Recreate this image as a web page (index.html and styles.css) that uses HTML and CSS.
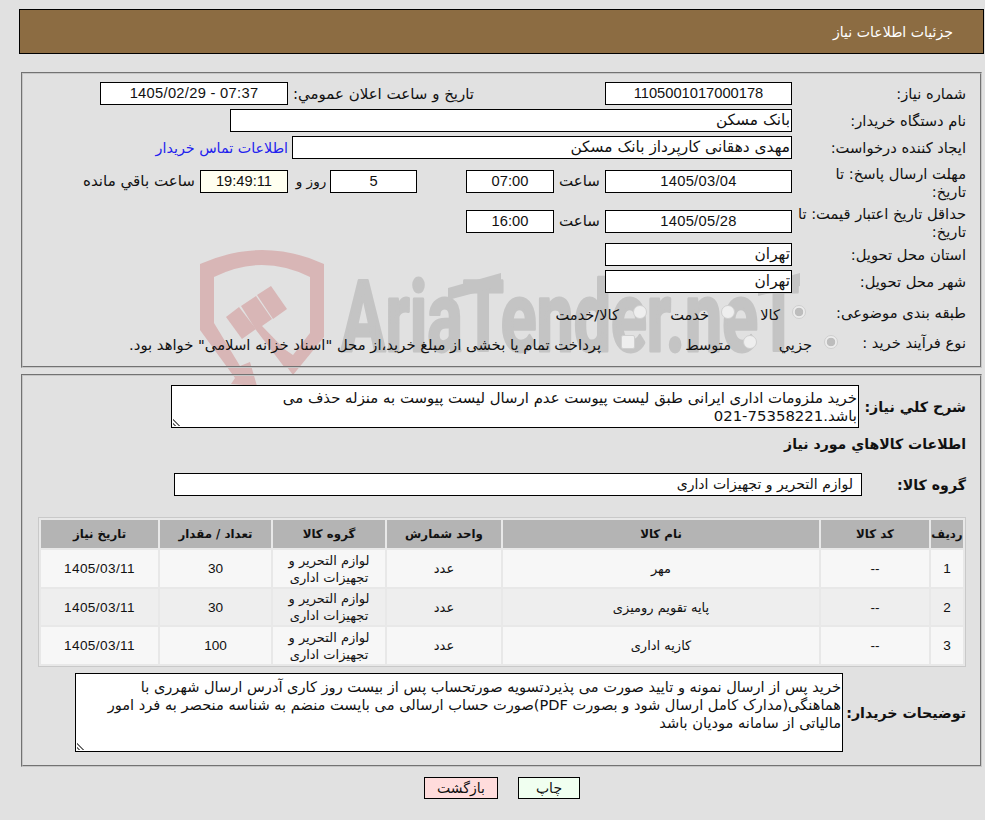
FILE: index.html
```html
<!DOCTYPE html>
<html lang="fa" dir="rtl">
<head>
<meta charset="utf-8">
<title>جزئیات اطلاعات نیاز</title>
<link rel="stylesheet" href="styles.css">
</head>
<body>
<svg class="watermark" viewBox="0 0 985 820" aria-hidden="true">
  <g class="wm-shield">
    <path d="M200 264 Q232 250 262 250 Q294 250 324 264 L324 337 L293 375 L262 334 L293 355 L310 333 L310 277 Q286 265 262 265 Q238 265 214 277 L214 323 L240 366 L250 362 L257 386 L231 384 L235 378 L200 330 Z"/>
    <polygon points="226,317 239,307 256,329 242,339"/>
    <polygon points="241,306 256,296 272,319 262,326 295,360 285,368 256,330"/>
    <polygon points="257,295 271,286 287,309 273,319"/>
  </g>
  <g class="wm-word">
    <text x="341" y="351" textLength="458" lengthAdjust="spacingAndGlyphs">AriaTender.neT</text>
    <polygon points="448,288 501,273 501,286 448,300"/>
    <polygon points="758,285 800,273 800,286 758,296"/>
  </g>
</svg>
<div class="page">
  <header class="title-bar">جزئیات اطلاعات نیاز</header>

  <section class="panel panel-top">
    <div class="row">
      <div class="lbl">شماره نیاز:</div>
      <div class="field f-main num">1105001017000178</div>
      <div class="lbl lbl-announce">تاریخ و ساعت اعلان عمومي:</div>
      <div class="field f-announce num date" dir="ltr">1405/02/29 - 07:37</div>
    </div>
    <div class="row">
      <div class="lbl">نام دستگاه خریدار:</div>
      <div class="field f-buyer text">بانک مسکن</div>
    </div>
    <div class="row">
      <div class="lbl">ایجاد کننده درخواست:</div>
      <div class="field f-creator text">مهدی دهقانی کارپرداز بانک مسکن</div>
      <a class="contact" href="#">اطلاعات تماس خریدار</a>
    </div>
    <div class="row row-tall">
      <div class="lbl">مهلت ارسال پاسخ: تا<br>تاریخ:</div>
      <div class="field f-main num date">1405/03/04</div>
      <div class="hour">ساعت</div>
      <div class="field f-time num">07:00</div>
      <div class="field f-days num">5</div>
      <div class="days-word">روز و</div>
      <div class="field f-count num" dir="ltr">19:49:11</div>
      <div class="remain">ساعت باقي مانده</div>
    </div>
    <div class="row row-tall">
      <div class="lbl">حداقل تاریخ اعتبار قیمت: تا<br>تاریخ:</div>
      <div class="field f-main num date">1405/05/28</div>
      <div class="hour">ساعت</div>
      <div class="field f-time num">16:00</div>
    </div>
    <div class="row">
      <div class="lbl">استان محل تحویل:</div>
      <div class="field f-main text">تهران</div>
    </div>
    <div class="row">
      <div class="lbl">شهر محل تحویل:</div>
      <div class="field f-main text">تهران</div>
    </div>
    <div class="row row-subject">
      <div class="lbl lbl-subject">طبقه بندی موضوعی:</div>
      <label class="opt opt-a"><input class="radio" type="radio" name="s" checked disabled>کالا</label>
      <label class="opt opt-b"><input class="radio" type="radio" name="s" disabled>خدمت</label>
      <label class="opt"><input class="radio radio-wide" type="radio" name="s" disabled>کالا/خدمت</label>
    </div>
    <div class="row row-process">
      <div class="lbl lbl-process">نوع فرآیند خرید :</div>
      <label class="opt opt-c"><input class="radio" type="radio" name="p" checked disabled>جزیي</label>
      <label class="opt opt-d"><input class="radio" type="radio" name="p" disabled>متوسط</label>
      <label class="opt opt-e"><input class="check" type="checkbox" disabled>پرداخت تمام یا بخشی از مبلغ خرید،از محل "اسناد خزانه اسلامی" خواهد بود.</label>
    </div>
  </section>

  <section class="panel panel-bottom">
    <div class="b-row b-summary">
      <div class="blbl">شرح کلي نیاز:</div>
      <div class="area-wrap wrap-summary">
        <textarea class="area area-summary" readonly wrap="off">خرید ملزومات اداری ایرانی طبق لیست پیوست عدم ارسال لیست پیوست به منزله حذف می
باشد.&#x2066;021-75358221&#x2069;</textarea>
      </div>
    </div>
    <h2 class="section-title">اطلاعات کالاهاي مورد نیاز</h2>
    <div class="b-row b-group">
      <div class="blbl blbl-group">گروه کالا:</div>
      <div class="field f-group">لوازم التحریر و تجهیزات اداری</div>
    </div>
    <table class="items">
      <colgroup>
        <col class="c1"><col class="c2"><col class="c3"><col class="c4"><col class="c5"><col class="c6"><col class="c7">
      </colgroup>
      <thead>
        <tr><th>ردیف</th><th>کد کالا</th><th>نام کالا</th><th>واحد شمارش</th><th>گروه کالا</th><th>تعداد / مقدار</th><th>تاریخ نیاز</th></tr>
      </thead>
      <tbody>
        <tr><td class="n">1</td><td class="n">--</td><td>مهر</td><td>عدد</td><td>لوازم التحریر و<br>تجهیزات اداری</td><td class="n">30</td><td class="n d">1405/03/11</td></tr>
        <tr class="alt"><td class="n">2</td><td class="n">--</td><td>پایه تقویم رومیزی</td><td>عدد</td><td>لوازم التحریر و<br>تجهیزات اداری</td><td class="n">30</td><td class="n d">1405/03/11</td></tr>
        <tr><td class="n">3</td><td class="n">--</td><td>کازیه اداری</td><td>عدد</td><td>لوازم التحریر و<br>تجهیزات اداری</td><td class="n">100</td><td class="n d">1405/03/11</td></tr>
      </tbody>
    </table>
    <div class="b-row b-notes">
      <div class="blbl blbl-notes">توضیحات خریدار:</div>
      <div class="area-wrap wrap-notes">
        <textarea class="area area-notes" readonly wrap="off">خرید پس از ارسال نمونه و تایید صورت می پذیردتسویه صورتحساب پس از بیست روز کاری آدرس ارسال شهرری با
هماهنگی(مدارک کامل ارسال شود و بصورت PDF)صورت حساب ارسالی می بایست منضم به شناسه منحصر به فرد امور
مالیاتی از سامانه مودیان باشد</textarea>
      </div>
    </div>
  </section>

  <div class="actions">
    <button class="btn btn-print" type="button">چاپ</button>
    <button class="btn btn-back" type="button">بازگشت</button>
  </div>
</div>
</body>
</html>
```

FILE: styles.css
```css
* { box-sizing: border-box; }
html, body { margin: 0; padding: 0; height: 820px; overflow: hidden; }
body {
  background: #e1e1e1;
  color: #111;
  font-family: "DejaVu Sans", "Liberation Sans", sans-serif;
  font-size: 14.6px;
  position: relative;
}
.watermark { position: absolute; left: 0; top: 0; width: 985px; height: 820px; direction: ltr; }
.wm-shield { fill: #d8b6b6; }
.wm-word { fill: #c4c4c4; }
.wm-word text {
  font-family: Roboto, sans-serif;
  font-weight: 700;
  font-size: 98px;
  stroke: #c4c4c4;
  stroke-width: 3px;
  stroke-linejoin: round;
}
.page { position: relative; padding: 9px 1px 0 19px; }
.title-bar {
  height: 45px;
  background: #8c6c42;
  border: 1px solid #000;
  color: #fff;
  padding-right: 30px;
  line-height: 44px;
  font-size: 14.1px;
}
.panel {
  margin: 0 2px;
  border: 2px groove #c6c6c6;
  padding-right: 14px;
}
.panel-top { margin-top: 18px; height: 296px; padding-top: 8px; display: flex; flex-direction: column; gap: 4px; }
.panel-bottom { margin-top: 6px; height: 393px; padding-top: 9px; padding-left: 14px; }
.row { display: flex; align-items: center; height: 23px; }
.row-tall { height: 36px; }
.row-tall .lbl { padding-top: 3px; }
.lbl { width: 166px; line-height: 18px; flex: none; white-space: nowrap; font-size: 14.7px; }
.field {
  background: #fff;
  border: 1px solid #000;
  height: 23px;
  line-height: 21px;
  flex: none;
  margin-right: 8px;
  white-space: nowrap;
}
.num { text-align: center; font-family: "Liberation Sans", "DejaVu Sans", sans-serif; font-size: 14.7px; }
.date { letter-spacing: .3px; }
.text { padding-right: 1px; font-size: 15.4px; }
.f-main { width: 187px; }
.f-announce { width: 188px; margin-right: 0; }
.lbl-announce { width: 186px; margin-right: 131px; font-size: 15px; }
.f-buyer { width: 562px; }
.f-creator { width: 500px; }
.contact { color: #2222ee; text-decoration: none; margin-right: 4px; font-size: 14.3px; }
.hour { width: 51px; text-align: center; flex: none; font-size: 15px; }
.f-time { width: 88px; margin-right: 0; }
.f-days { width: 87px; margin-right: 49px; }
.days-word { width: 42px; text-align: center; flex: none; padding-left: 4px; font-size: 13.6px; }
.f-count { width: 88px; background: #fffff0; margin-right: 0; }
.remain { margin-right: 5px; white-space: nowrap; font-size: 15.1px; }
.row-subject { height: 30px; }
.row-process { height: 22px; }
.row-subject .lbl, .row-process .lbl { padding-top: 2px; }
.lbl-subject { width: 160px; }
.lbl-process { width: 128px; }
.opt { display: flex; align-items: center; flex: none; color: #111; white-space: nowrap; padding-top: 4px; }
.opt-a { width: 71px; }
.opt-b { width: 88px; }
.opt-c { width: 81px; }
.opt-d { width: 122px; }
.opt-e { font-size: 14.8px; }
.radio, .check {
  appearance: none;
  -webkit-appearance: none;
  width: 14px;
  height: 14px;
  margin: -5px 0 0 12px;
  flex: none;
  background: #eeeeee;
  border: 1px solid #cfcfcf;
}
.radio { border-radius: 50%; }
.radio:checked { background: radial-gradient(circle, #bdbdbd 0 4px, #ececec 4.6px); }
.radio-wide { margin-left: 14px; }
.check { border-radius: 2px; margin-left: 20px; }
.b-row { display: flex; }
.blbl { font-weight: 700; font-size: 14.2px; flex: none; }
.b-summary { align-items: center; height: 43px; }
.b-summary .blbl { width: 107px; }
.area-wrap { position: relative; flex: none; }
.area-wrap::after {
  content: "";
  position: absolute;
  left: 2px;
  bottom: 2px;
  width: 9px;
  height: 9px;
  background: repeating-linear-gradient(45deg, #fff 0 1.4px, #6e6e6e 1.4px 2.8px);
  clip-path: polygon(0 0, 0 100%, 100% 100%);
}
.wrap-summary { width: 688px; height: 43px; }
.wrap-notes { width: 768px; height: 79px; }
.area {
  display: block;
  width: 100%;
  height: 100%;
  background: #fff;
  border: 1px solid #000;
  border-radius: 0;
  font: inherit;
  color: #111;
  line-height: 18px;
  padding: 3px 1px 0;
  margin: 0;
  overflow: hidden;
  outline: none;
  resize: none;
  direction: rtl;
}
.area-summary { font-size: 14.9px; }
.section-title { font-size: 14.1px; font-weight: 700; margin: 7px 0 0; height: 24px; line-height: 18px; }
.b-group { align-items: center; margin-top: 14px; height: 23px; }
.blbl-group { width: 104px; }
.f-group { width: 688px; margin: 0; padding-right: 8px; font-size: 14px; }
.items {
  table-layout: fixed;
  width: 928px;
  margin: 21px 0 0;
  border: 1px solid #c9c9c9;
  border-spacing: 2px;
  background: #e8e8e8;
}
.c1 { width: 32px; } .c2 { width: 108px; } .c3 { width: 316px; } .c4 { width: 114px; }
.c5 { width: 112px; } .c6 { width: 111px; } .c7 { width: 117px; }
.items th {
  background: #b4b4b4;
  height: 28px;
  font-size: 11.8px;
  font-weight: 700;
  padding: 0;
}
.items td {
  background: #f7f7f7;
  height: 37px;
  text-align: center;
  padding: 0;
  font-size: 13px;
  line-height: 17px;
}
.items .alt td { background: #eeeeee; height: 36px; }
.items td.n { font-family: "Liberation Sans", "DejaVu Sans", sans-serif; font-size: 13.6px; }
.items td.d { letter-spacing: .4px; }
.b-notes { align-items: center; margin-top: 6px; height: 79px; }
.blbl-notes { width: 123px; }
.area-notes { padding-top: 4px; }
.actions { display: flex; gap: 20px; margin-top: 10px; padding-right: 404px; }
.btn {
  height: 22px;
  border: 1px solid #000;
  padding: 0;
  font: inherit;
  font-size: 14px;
  color: #111;
  border-radius: 0;
}
.btn-back { width: 74px; background: #ffdcdc; }
.btn-print { width: 62px; background: #f0fff0; }
```
